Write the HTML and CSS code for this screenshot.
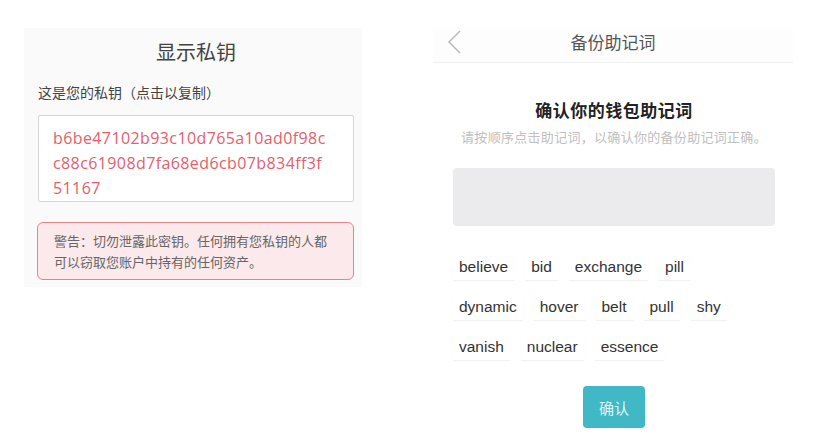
FILE: index.html
```html
<!DOCTYPE html>
<html lang="zh-CN">
<head>
    <meta charset="UTF-8">
    <meta name="viewport" content="width=device-width, initial-scale=1.0">
    <title>私钥与助记词</title>
    <link rel="stylesheet" href="styles.css">
</head>
<body>
    <div class="screens">
        <section class="key-panel">
            <h1 class="key-title">显示私钥</h1>
            <p class="key-label">这是您的私钥（点击以复制）</p>
            <div class="key-box">b6be47102b93c10d765a10ad0f98c<br>c88c61908d7fa68ed6cb07b834ff3f<br>51167</div>
            <div class="key-warning">警告：切勿泄露此密钥。任何拥有您私钥的人都<br>可以窃取您账户中持有的任何资产。</div>
        </section>

        <section class="backup-panel">
            <header class="nav">
                <span class="nav-back">
                    <svg width="16" height="24" viewBox="0 0 16 24">
                        <polyline points="14,1 3,12 14,23" fill="none" stroke="#b5b5b5" stroke-width="1.4"/>
                    </svg>
                </span>
                <span class="nav-title">备份助记词</span>
                <span></span>
            </header>
            <div class="backup-body">
                <h2 class="backup-title">确认你的钱包助记词</h2>
                <p class="backup-hint">请按顺序点击助记词，以确认你的备份助记词正确。</p>
                <div class="picked"></div>
                <div class="words">
                    <div class="word-row">
                        <span class="word">believe</span>
                        <span class="word">bid</span>
                        <span class="word">exchange</span>
                        <span class="word">pill</span>
                    </div>
                    <div class="word-row">
                        <span class="word">dynamic</span>
                        <span class="word">hover</span>
                        <span class="word">belt</span>
                        <span class="word">pull</span>
                        <span class="word">shy</span>
                    </div>
                    <div class="word-row">
                        <span class="word">vanish</span>
                        <span class="word">nuclear</span>
                        <span class="word">essence</span>
                    </div>
                </div>
                <div class="actions">
                    <button class="confirm">确认</button>
                </div>
            </div>
        </section>
    </div>
</body>
</html>
```

FILE: styles.css
```css
body {
    margin: 0;
    background: #fff;
    font-family: "Liberation Sans", "Noto Sans CJK SC", sans-serif;
}
.screens {
    display: flex;
    align-items: flex-start;
    padding: 28px 0 0 24px;
    gap: 71px;
}

/* left: private key */
.key-panel {
    width: 338px;
    height: 259px;
    box-sizing: border-box;
    padding: 12px 8px 0 14px;
    background: #fafafa;
    font-family: "Open Sans", "Noto Sans CJK SC", sans-serif;
}
.key-title {
    margin: 0;
    font-size: 20px;
    font-weight: normal;
    line-height: 24px;
    text-align: center;
    color: #444;
    font-family: "Noto Sans CJK SC", sans-serif;
}
.key-label {
    margin: 18px 0 0;
    font-size: 14px;
    line-height: 20px;
    color: #444;
    font-family: "Noto Sans CJK SC", sans-serif;
}
.key-box {
    margin-top: 13px;
    height: 87px;
    box-sizing: border-box;
    padding: 10px 0 0 14px;
    border: 1px solid #d2d5da;
    border-radius: 2px;
    background: #fff;
    color: #e4606b;
    font-size: 16px;
    line-height: 25px;
    letter-spacing: 0.4px;
}
.key-warning {
    margin-top: 20px;
    margin-left: -1px;
    height: 58px;
    box-sizing: border-box;
    padding: 7px 0 0 16px;
    border: 1px solid #e8838b;
    border-radius: 6px;
    background: #fbe9eb;
    color: #666;
    font-size: 13px;
    line-height: 21px;
    font-family: "Noto Sans CJK SC", sans-serif;
}

/* right: mnemonic backup */
.backup-panel {
    width: 360px;
}
.nav {
    display: grid;
    grid-template-columns: 1fr auto 1fr;
    align-items: center;
    height: 34px;
    border-bottom: 1px solid #eef0f2;
    background: #fdfdfd;
}
.nav-back {
    display: flex;
    padding-left: 13px;
    margin-top: -6px;
}
.nav-title {
    font-size: 17px;
    line-height: 28px;
    margin-top: -6px;
    color: #555;
    font-family: "Noto Sans CJK SC", sans-serif;
}
.backup-body {
    padding: 0 18px 0 20px;
}
.backup-title {
    margin: 35px 0 0;
    font-size: 17px;
    line-height: 24px;
    letter-spacing: 0.5px;
    font-weight: 600;
    text-align: center;
    color: #222;
    font-family: "Noto Sans CJK SC", sans-serif;
}
.backup-hint {
    margin: 6px 0 0;
    font-size: 13px;
    line-height: 18px;
    letter-spacing: 0.3px;
    text-align: center;
    color: #c0c0c0;
    font-family: "Noto Sans CJK SC", sans-serif;
}
.picked {
    margin-top: 22px;
    height: 58px;
    border-radius: 4px;
    background: #ebebed;
}
.words {
    display: flex;
    flex-direction: column;
    gap: 14px;
    margin-top: 28px;
}
.word-row {
    display: flex;
    gap: 11px;
}
.word {
    height: 26px;
    line-height: 26px;
    padding: 0 6px;
    font-size: 15.5px;
    color: #333;
    background: #fff;
    box-shadow: 0 1px 1px rgba(0, 0, 0, 0.05);
}
.actions {
    display: flex;
    justify-content: center;
    margin-top: 26px;
}
.confirm {
    width: 62px;
    height: 42px;
    border: 0;
    border-radius: 4px;
    background: #40b8c5;
    color: #e3f5f7;
    font-size: 15px;
    font-family: "Noto Sans CJK SC", sans-serif;
}
```
